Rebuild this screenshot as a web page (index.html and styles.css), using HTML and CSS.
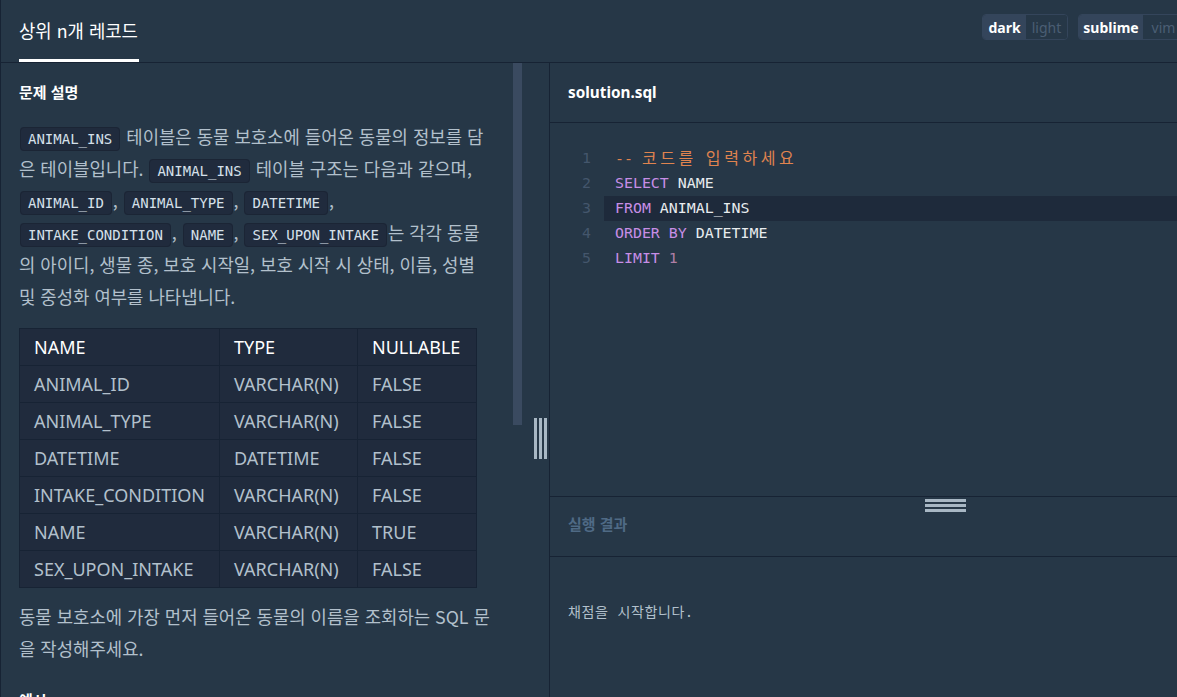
FILE: index.html
```html
<!DOCTYPE html>
<html lang="ko">
<head>
<meta charset="utf-8">
<title>상위 n개 레코드</title>
<link rel="stylesheet" href="styles.css">
</head>
<body>
<div class="app">
  <header class="topbar">
    <div class="tab">상위 n개 레코드</div>
    <div class="toggles">
      <div class="toggle"><span class="opt on w-dark">dark</span><span class="opt off w-light">light</span></div>
      <div class="toggle"><span class="opt on w-sublime">sublime</span><span class="opt off w-vim">vim</span></div>
    </div>
  </header>
  <div class="main">
    <section class="left">
      <div class="desc">
        <h4 class="desc-title">문제 설명</h4>
        <p class="para"><code>ANIMAL_INS</code> 테이블은 동물 보호소에 들어온 동물의 정보를 담<br>은 테이블입니다. <code>ANIMAL_INS</code> 테이블 구조는 다음과 같으며,<br><code>ANIMAL_ID</code>, <code>ANIMAL_TYPE</code>, <code>DATETIME</code>,<br><code>INTAKE_CONDITION</code>, <code>NAME</code>, <code>SEX_UPON_INTAKE</code>는 각각 동물<br>의 아이디, 생물 종, 보호 시작일, 보호 시작 시 상태, 이름, 성별<br>및 중성화 여부를 나타냅니다.</p>
        <table class="schema">
          <thead>
            <tr><th>NAME</th><th>TYPE</th><th>NULLABLE</th></tr>
          </thead>
          <tbody>
            <tr><td>ANIMAL_ID</td><td>VARCHAR(N)</td><td>FALSE</td></tr>
            <tr><td>ANIMAL_TYPE</td><td>VARCHAR(N)</td><td>FALSE</td></tr>
            <tr><td>DATETIME</td><td>DATETIME</td><td>FALSE</td></tr>
            <tr><td>INTAKE_CONDITION</td><td>VARCHAR(N)</td><td>FALSE</td></tr>
            <tr><td>NAME</td><td>VARCHAR(N)</td><td>TRUE</td></tr>
            <tr><td>SEX_UPON_INTAKE</td><td>VARCHAR(N)</td><td>FALSE</td></tr>
          </tbody>
        </table>
        <p class="para">동물 보호소에 가장 먼저 들어온 동물의 이름을 조회하는 SQL 문<br>을 작성해주세요.</p>
        <h4 class="desc-title">예시</h4>
      </div>
      <div class="scrollbar"><div class="thumb"></div></div>
    </section>
    <div class="vsplit"><div class="vhandle"><i></i><i></i><i></i></div></div>
    <section class="right">
      <div class="file-header">solution.sql</div>
      <div class="editor">
        <div class="line"><span class="ln">1</span><span class="code"><span class="cm">-- <span class="ko">코드를</span> <span class="ko">입력하세요</span></span></span></div>
        <div class="line"><span class="ln">2</span><span class="code"><span class="kw">SELECT</span> NAME</span></div>
        <div class="line active"><span class="ln">3</span><span class="code"><span class="kw">FROM</span> ANIMAL_INS</span></div>
        <div class="line"><span class="ln">4</span><span class="code"><span class="kw">ORDER BY</span> DATETIME</span></div>
        <div class="line"><span class="ln">5</span><span class="code"><span class="kw">LIMIT</span> <span class="num">1</span></span></div>
      </div>
      <div class="result-header">
        <div class="hhandle"><i></i><i></i><i></i></div>
        <span class="result-title">실행 결과</span>
      </div>
      <div class="result-body">채점을 시작합니다.</div>
    </section>
  </div>
</div>
</body>
</html>
```
FILE: styles.css
```css
* { box-sizing: border-box; }
html, body { margin: 0; padding: 0; }
body {
  background: #263747;
  color: #b2c0cc;
  font-family: "Noto Sans CJK KR", "Noto Sans", sans-serif;
  overflow: hidden;
}
.app {
  width: 1177px;
  height: 697px;
  display: flex;
  flex-direction: column;
  border-left: 1px solid #172334;
}
.topbar {
  height: 63px;
  flex: 0 0 63px;
  border-bottom: 1px solid #172334;
  display: flex;
  justify-content: space-between;
  align-items: flex-start;
  padding-left: 18px;
}
.tab {
  height: 62px;
  padding-top: 17px;
  font-size: 17.8px;
  line-height: 26px;
  color: #ffffff;
  border-bottom: 3px solid #ffffff;
  padding-right: 1px;
}
.toggles {
  display: flex;
  gap: 10px;
  padding-top: 14px;
  margin-right: -8px;
  flex-shrink: 0;
}
.toggle {
  display: flex;
  height: 26px;
  border-radius: 4px;
  border: 1px solid #34455b;
  overflow: hidden;
  font-family: "Noto Sans", sans-serif;
  font-size: 14px;
}
.opt {
  display: flex;
  align-items: center;
  justify-content: center;
}
.opt.on { background: #34455b; color: #ffffff; font-weight: 700; }
.opt.off { background: #263747; color: #4b5e74; }
.w-dark { width: 43px; }
.w-light { width: 41px; }
.w-sublime { width: 64px; }
.w-vim { width: 41px; }

.main {
  flex: 1;
  display: flex;
  min-height: 0;
}
.left {
  width: 521px;
  flex: 0 0 521px;
  display: flex;
}
.desc {
  flex: 1;
  padding: 17px 4px 0 18px;
  overflow: hidden;
}
.desc-title {
  margin: 0;
  color: #ffffff;
  font-size: 15px;
  font-weight: 700;
  line-height: 24px;
}
.para {
  margin: 16px 0 0;
  font-size: 17.8px;
  line-height: 32px;
  color: #b2c0cc;
  white-space: nowrap;
}
code {
  font-family: "DejaVu Sans Mono", monospace;
  font-size: 14px;
  line-height: 16px;
  color: #d6e0ea;
  background: #202b3d;
  border: 1px solid #1b2535;
  border-radius: 4px;
  padding: 3px 7px;
  margin: 0 1px;
}
.schema {
  margin-top: 16px;
  border-collapse: collapse;
  background: #202b3d;
  font-family: "Noto Sans", sans-serif;
  font-size: 18px;
}
.schema th, .schema td {
  border: 1px solid #172334;
  height: 37px;
  padding: 0 14px;
  text-align: left;
  white-space: nowrap;
}
.schema th { color: #ffffff; font-weight: 400; }
.schema td { color: #b2c0cc; }
.schema th:nth-child(1) { width: 198px; }
.schema th:nth-child(2) { width: 138px; }
.schema th:nth-child(3) { width: 119px; }
.desc .para + .desc-title { margin-top: 24px; }
.schema + .para { margin-top: 12px; }

.scrollbar {
  width: 9px;
  flex: 0 0 9px;
}
.thumb {
  height: 362px;
  background: #3a4a60;
}
.vsplit {
  width: 28px;
  flex: 0 0 28px;
  border-right: 1px solid #172334;
  padding-top: 355px;
  padding-left: 12px;
}
.vhandle {
  display: flex;
  gap: 2px;
  height: 41px;
}
.vhandle i {
  display: block;
  width: 3px;
  height: 41px;
  background: #a8b7c4;
}
.right {
  flex: 1;
  display: flex;
  flex-direction: column;
}
.file-header {
  height: 60px;
  flex: 0 0 60px;
  border-bottom: 1px solid #172334;
  padding-left: 18px;
  display: flex;
  align-items: center;
  color: #ffffff;
  font-family: "Noto Sans", sans-serif;
  font-weight: 700;
  font-size: 15.3px;
  padding-bottom: 1px;
}
.editor {
  height: 374px;
  flex: 0 0 374px;
  border-bottom: 1px solid #172334;
  padding-top: 23px;
  font-family: "DejaVu Sans Mono", "Noto Sans CJK KR", monospace;
  font-size: 14.9px;
  color: #e8ecef;
}
.line {
  display: flex;
  height: 25px;
  line-height: 25px;
}
.ln {
  width: 54px;
  flex: 0 0 54px;
  text-align: right;
  padding-right: 13px;
  color: #44566c;
}
.code {
  flex: 1;
  padding-left: 11px;
  white-space: pre;
}
.line.active .code { background: #1e2a3b; }
.cm { color: #e0844f; }
.ko { letter-spacing: 3.6px; font-size: 16px; }
.kw { color: #c78ee6; }
.num { color: #b07fa6; }
.result-header {
  position: relative;
  height: 60px;
  flex: 0 0 60px;
  border-bottom: 1px solid #172334;
  padding-left: 18px;
  padding-bottom: 6px;
  display: flex;
  align-items: center;
}
.result-title {
  color: #4f6a85;
  font-size: 15px;
  font-weight: 700;
}
.hhandle {
  position: absolute;
  top: 2px;
  left: 375px;
  width: 41px;
  display: flex;
  flex-direction: column;
  gap: 2px;
}
.hhandle i {
  display: block;
  height: 3px;
  background: #a8b7c4;
}
.result-body {
  flex: 1;
  padding: 44px 0 0 18px;
  font-family: "DejaVu Sans Mono", "Noto Sans CJK KR", monospace;
  font-size: 14px;
  letter-spacing: 0.6px;
  color: #b2c0cc;
}
```
